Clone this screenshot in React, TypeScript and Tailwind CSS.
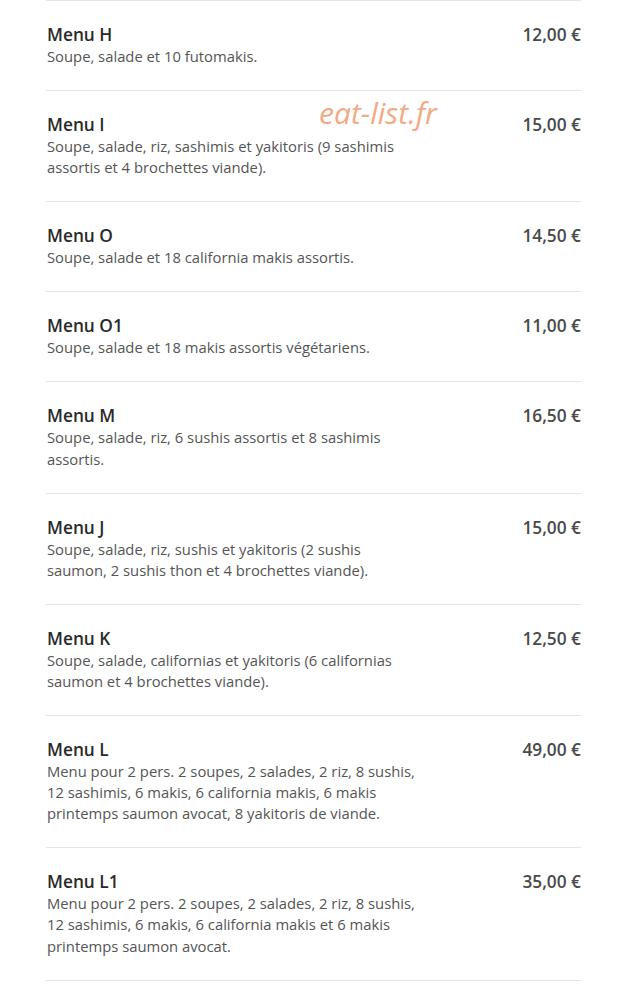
import React from 'react';

type Item = { name: string; desc: string; price: string };

const items: Item[] = [
  { name: 'Menu H', desc: 'Soupe, salade et 10 futomakis.', price: '12,00 €' },
  { name: 'Menu I', desc: 'Soupe, salade, riz, sashimis et yakitoris (9 sashimis assortis et 4 brochettes viande).', price: '15,00 €' },
  { name: 'Menu O', desc: 'Soupe, salade et 18 california makis assortis.', price: '14,50 €' },
  { name: 'Menu O1', desc: 'Soupe, salade et 18 makis assortis végétariens.', price: '11,00 €' },
  { name: 'Menu M', desc: 'Soupe, salade, riz, 6 sushis assortis et 8 sashimis assortis.', price: '16,50 €' },
  { name: 'Menu J', desc: 'Soupe, salade, riz, sushis et yakitoris (2 sushis saumon, 2 sushis thon et 4 brochettes viande).', price: '15,00 €' },
  { name: 'Menu K', desc: 'Soupe, salade, californias et yakitoris (6 californias saumon et 4 brochettes viande).', price: '12,50 €' },
  { name: 'Menu L', desc: 'Menu pour 2 pers. 2 soupes, 2 salades, 2 riz, 8 sushis, 12 sashimis, 6 makis, 6 california makis, 6 makis printemps saumon avocat, 8 yakitoris de viande.', price: '49,00 €' },
  { name: 'Menu L1', desc: 'Menu pour 2 pers. 2 soupes, 2 salades, 2 riz, 8 sushis, 12 sashimis, 6 makis, 6 california makis et 6 makis printemps saumon avocat.', price: '35,00 €' },
];

const App: React.FC = () => {
  return (
    <div className="relative min-h-[988px] bg-white pl-[46px] pr-[56px]" style={{ fontFamily: '"Open Sans", sans-serif' }}>
      <div className="border-t border-[#e6e6e6]">
        {items.map((it) => (
          <div key={it.name} className="flex justify-between border-b border-[#e6e6e6] pt-[23px] pb-[23px]">
            <div className="w-[374px] pl-px">
              <div className="text-[17.3px] leading-[22px] font-semibold text-[#2a2a2a]">{it.name}</div>
              <div className="text-[14.8px] leading-[21.1px] text-[#555]">{it.desc}</div>
            </div>
            <div className="text-[17.3px] leading-[22px] font-semibold text-[#4a4a4a]">{it.price}</div>
          </div>
        ))}
      </div>
      <div className="absolute left-[319px] top-[93px] text-[30px] italic text-[#f3a985] leading-[40px]">eat-list.fr</div>
    </div>
  );
};

export default App;
